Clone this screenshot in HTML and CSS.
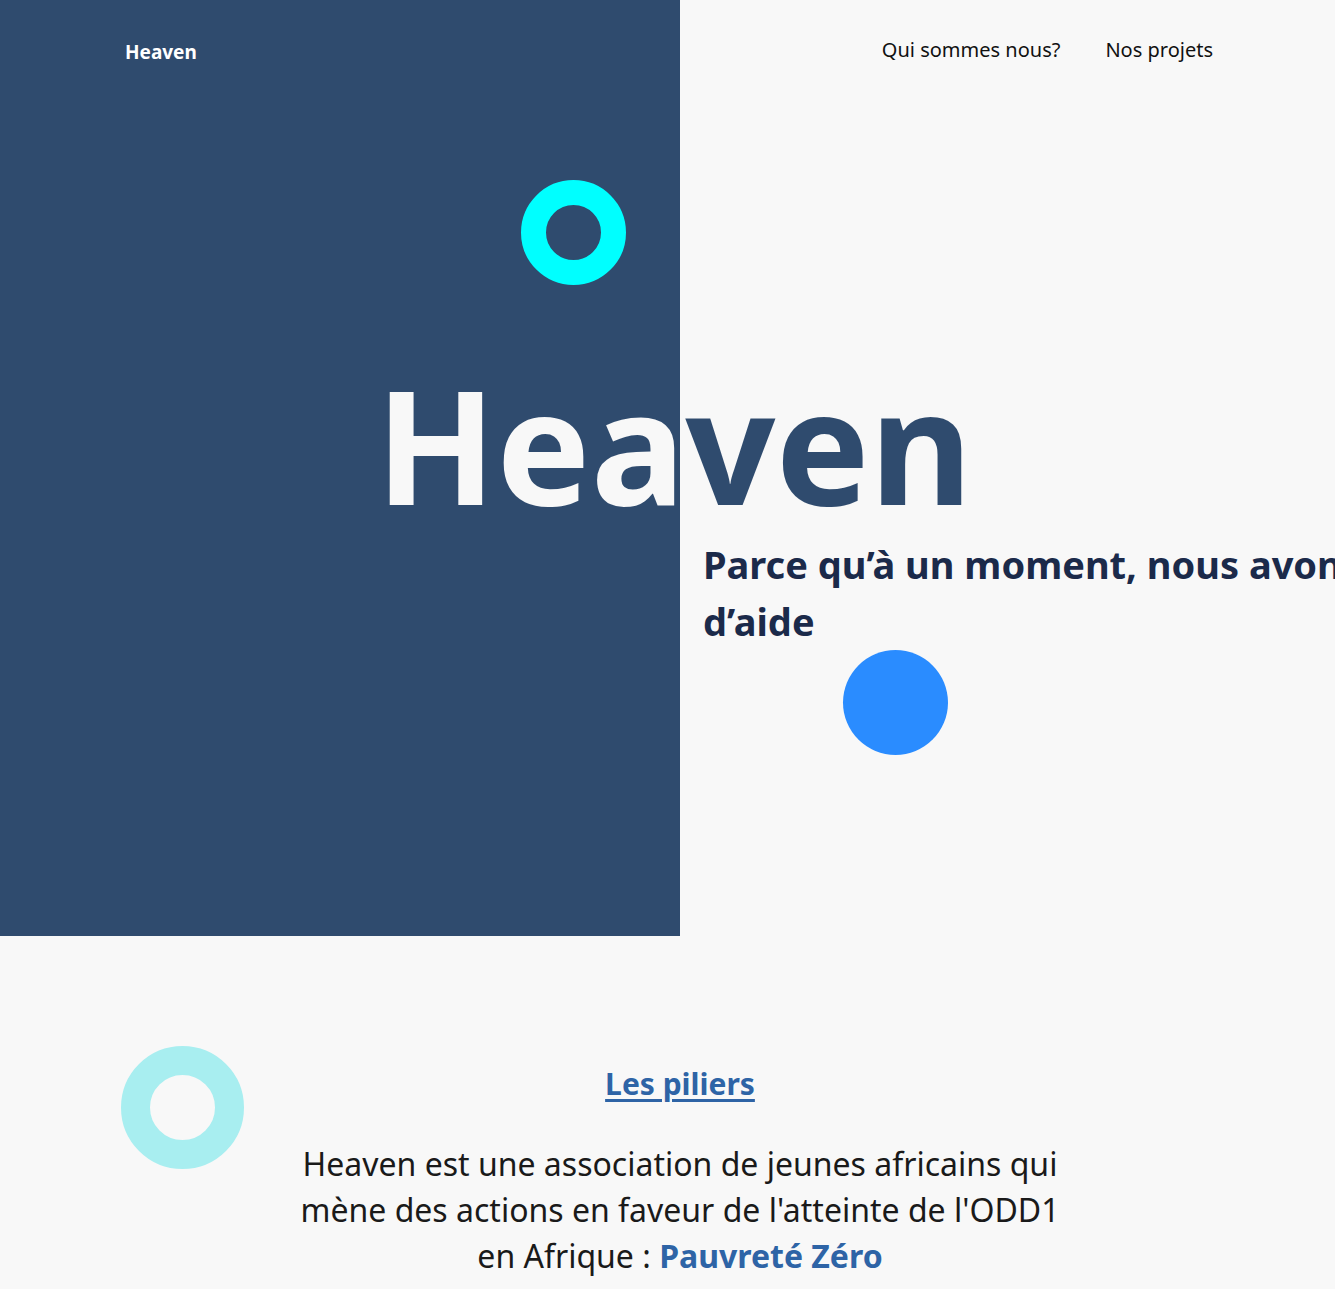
FILE: index.html
```html
<!DOCTYPE html>
<html lang="fr">
<head>
<meta charset="utf-8">
<title>Heaven</title>
<link rel="stylesheet" href="styles.css">
</head>
<body>
<div class="page">
  <header class="hero">
    <nav class="nav">
      <a class="logo" href="#">Heaven</a>
      <ul class="links">
        <li><a href="#">Qui sommes nous?</a></li>
        <li><a href="#">Nos projets</a></li>
      </ul>
    </nav>
    <span class="ring ring-cyan"></span>
    <h1 class="title">Heaven</h1>
    <div class="tagline-row">
      <div></div>
      <p class="tagline">Parce qu’à un moment, nous avons tous besoin d’aide</p>
    </div>
    <span class="dot dot-blue"></span>
  </header>
  <section class="pillars">
    <span class="ring ring-light"></span>
    <h2 class="pillars-title"><a href="#">Les piliers</a></h2>
    <p class="pillars-text">Heaven est une association de jeunes africains qui mène des actions en faveur de l'atteinte de l'ODD1 en Afrique : <strong>Pauvreté Zéro</strong></p>
  </section>
</div>
</body>
</html>
```

FILE: styles.css
```css
html, body {
  margin: 0;
  padding: 0;
  background: #f8f8f8;
  overflow-x: hidden;
}
body {
  font-family: "Noto Sans", "Open Sans", sans-serif;
  color: #1a1a1a;
}
.page {
  width: 1360px;
  position: relative;
}
.hero {
  position: relative;
  height: 936px;
  background: linear-gradient(to right, #2f4b6e 680px, transparent 680px);
}
.nav {
  display: flex;
  justify-content: space-between;
  align-items: baseline;
  padding: 35px 147px 0 125px;
  height: 30px;
}
.logo {
  color: #ffffff;
  font-weight: 700;
  font-size: 19px;
  text-decoration: none;
  line-height: 30px;
  position: relative;
  top: 2px;
}
.links {
  display: flex;
  gap: 45px;
  list-style: none;
  margin: 0;
  padding: 0;
}
.links a {
  color: #111111;
  text-decoration: none;
  font-size: 20px;
  line-height: 30px;
}
.title {
  margin: 300px 0 0;
  font-size: 158px;
  line-height: 158px;
  font-weight: 700;
  text-align: center;
  padding-right: 12px;
  background: linear-gradient(to right, #f8f8f8 680px, #2f4b6e 680px);
  -webkit-background-clip: text;
  background-clip: text;
  color: transparent;
}
.tagline-row {
  display: grid;
  grid-template-columns: 680px 680px;
  margin-top: 13px;
}
.tagline {
  margin: 0;
  padding-left: 23px;
  width: 900px;
  font-size: 38px;
  line-height: 57px;
  font-weight: 700;
  color: #1b2a4a;
}
.ring, .dot {
  position: absolute;
  border-radius: 50%;
  box-sizing: border-box;
}
.ring-cyan {
  left: 521px;
  top: 180px;
  width: 105px;
  height: 105px;
  border: 25px solid #00ffff;
}
.dot-blue {
  left: 843px;
  top: 650px;
  width: 105px;
  height: 105px;
  background: #2a8cff;
}
.pillars {
  position: relative;
  padding-top: 128px;
  padding-bottom: 60px;
  text-align: center;
}
.ring-light {
  left: 121px;
  top: 110px;
  width: 123px;
  height: 123px;
  border: 29px solid #a8eef0;
}
.pillars-title {
  margin: 0;
  font-size: 30px;
  line-height: 40px;
  font-weight: 700;
}
.pillars-title a {
  color: #2e64a6;
  text-decoration: underline;
  text-decoration-thickness: 3px;
  text-underline-offset: 4px;
}
.pillars-text {
  margin: 37px auto 0;
  max-width: 780px;
  font-size: 32px;
  line-height: 46px;
  color: #1a1a1a;
}
.pillars-text strong {
  color: #2e64a6;
  font-weight: 700;
}
```
